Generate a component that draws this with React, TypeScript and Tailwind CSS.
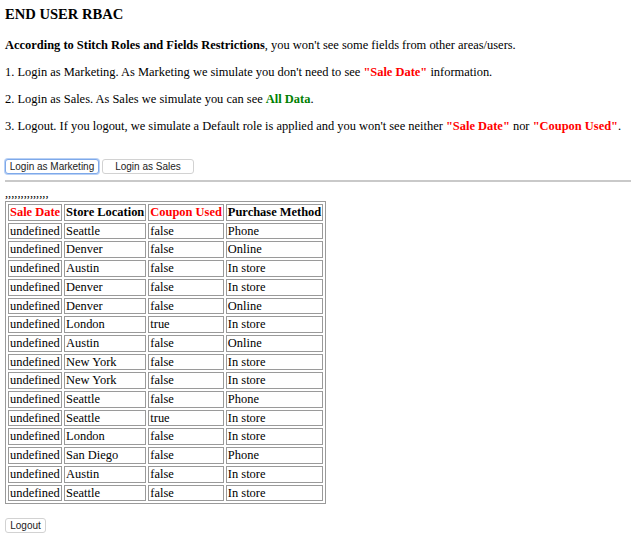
const rows = [
  ["Seattle", "false", "Phone"],
  ["Denver", "false", "Online"],
  ["Austin", "false", "In store"],
  ["Denver", "false", "In store"],
  ["Denver", "false", "Online"],
  ["London", "true", "In store"],
  ["Austin", "false", "Online"],
  ["New York", "false", "In store"],
  ["New York", "false", "In store"],
  ["Seattle", "false", "Phone"],
  ["Seattle", "true", "In store"],
  ["London", "false", "In store"],
  ["San Diego", "false", "Phone"],
  ["Austin", "false", "In store"],
  ["Seattle", "false", "In store"],
];

const cell = "border border-[#9a9a9a] px-px py-0 text-left align-middle leading-[14.7px]";

const App = () => {
  return (
    <div className="min-h-[537px] bg-white pl-[5px] pt-[5px] font-['Liberation_Serif',serif] text-[12.45px] leading-[15px] text-black">
      <h3 className="text-[14.6px] font-bold leading-[18px]">END USER RBAC</h3>

      <p className="mt-[15px]">
        <b>According to Stitch Roles and Fields Restrictions</b>, you won't see some fields from other areas/users.
      </p>
      <p className="mt-[12px]">
        1. Login as Marketing. As Marketing we simulate you don't need to see{" "}
        <b className="text-[#ff0000]">"Sale Date"</b> information.
      </p>
      <p className="mt-[12px]">
        2. Login as Sales. As Sales we simulate you can see <b className="text-[#008000]">All Data</b>.
      </p>
      <p className="mt-[12px] whitespace-nowrap">
        3. Logout. If you logout, we simulate a Default role is applied and you won't see neither{" "}
        <b className="text-[#ff0000]">"Sale Date"</b> nor <b className="text-[#ff0000]">"Coupon Used"</b>.
      </p>

      {/* role buttons */}
      <div className="mt-[25px] flex gap-[3px] font-['Liberation_Sans',sans-serif] text-[10px] leading-none text-[#222]">
        <button className="h-[15px] w-[94px] rounded-[3px] border border-[#7ea9ea] bg-white shadow-[0_0_0_1px_#b9d1f5]">
          Login as Marketing
        </button>
        <button className="h-[15px] w-[92px] rounded-[3px] border border-[#d2d2d2] bg-white">
          Login as Sales
        </button>
      </div>

      <hr className="mt-[6px] border-0 border-t-2 border-[#c9c9c9]" />

      <div className="mt-[4px] leading-[15px]">,,,,,,,,,,,,,,</div>

      <table className="border-separate border-spacing-[2px] border border-[#9a9a9a]">
        <thead>
          <tr className="font-bold">
            <th className={`${cell} text-[#ff0000]`}>Sale Date</th>
            <th className={cell}>Store Location</th>
            <th className={`${cell} text-[#ff0000]`}>Coupon Used</th>
            <th className={cell}>Purchase Method</th>
          </tr>
        </thead>
        <tbody>
          {rows.map((r, i) => (
            <tr key={i}>
              <td className={cell}>undefined</td>
              <td className={cell}>{r[0]}</td>
              <td className={cell}>{r[1]}</td>
              <td className={cell}>{r[2]}</td>
            </tr>
          ))}
        </tbody>
      </table>

      <button className="mt-[14px] h-[15px] w-[41px] rounded-[3px] border border-[#d2d2d2] bg-white font-['Liberation_Sans',sans-serif] text-[10px] leading-none text-[#222]">
        Logout
      </button>
    </div>
  );
};

export default App;
